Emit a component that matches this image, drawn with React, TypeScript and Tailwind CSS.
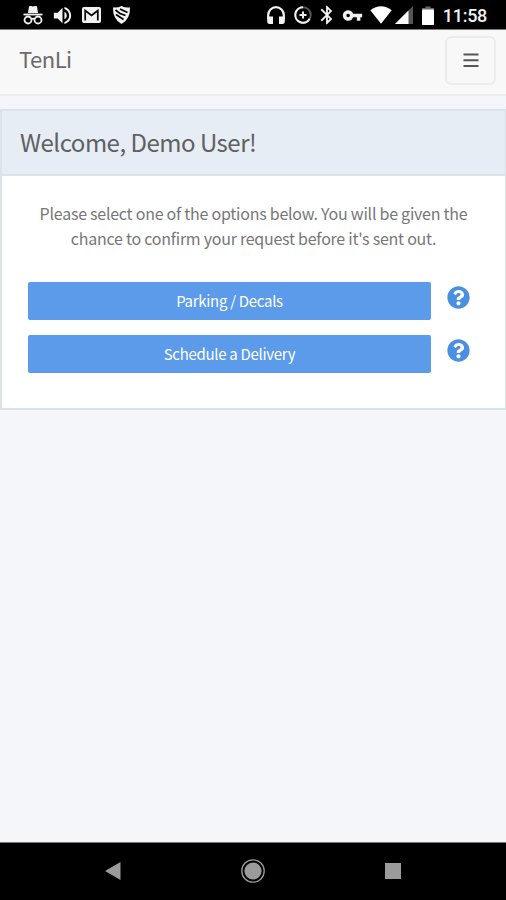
import React from 'react';
import { FaQuestionCircle } from 'react-icons/fa';
import { MdBluetooth, MdVolumeUp, MdVpnKey } from 'react-icons/md';

interface RequestOption {
  id: string;
  label: string;
}

const options: RequestOption[] = [
  { id: 'parking', label: 'Parking / Decals' },
  { id: 'delivery', label: 'Schedule a Delivery' },
];

const IncognitoIcon = () => (
  <svg width="20" height="20" viewBox="0 0 20 20" fill="none">
    <path d="M6 1.2 L8.2 1 L10 1.6 L11.8 1 L14 1.2 L15 8 H5 Z" fill="#f2f2f2" />
    <path d="M0.5 9.5 H19.5" stroke="#f2f2f2" strokeWidth="1.8" />
    <circle cx="5" cy="15" r="3.5" stroke="#f2f2f2" strokeWidth="1.8" />
    <circle cx="15" cy="15" r="3.5" stroke="#f2f2f2" strokeWidth="1.8" />
    <path d="M8 14.3 Q10 13 12 14.3" stroke="#f2f2f2" strokeWidth="1.6" />
  </svg>
);

const MailIcon = () => (
  <svg width="19" height="16" viewBox="0 0 19 16">
    <rect width="19" height="16" rx="2" fill="#f2f2f2" />
    <path d="M3.2 13.5 V3.5 L9.5 8.5 L15.8 3.5 V13.5" fill="none" stroke="#000" strokeWidth="1.7" />
  </svg>
);

const ShieldIcon = () => (
  <svg width="19" height="20" viewBox="0 0 19 20">
    <path d="M1 2.5 Q6 3 9.5 1 Q13 3 18 2.5 Q18.5 14 9.5 19 Q0.5 14 1 2.5 Z" fill="#f2f2f2" />
    <path d="M3.5 5 L8 8.5 L13.5 10.5 M8 4 L15.5 7.5 M4 9.5 L11.5 14.5" fill="none" stroke="#000" strokeWidth="1.6" />
  </svg>
);

const HeadphonesIcon = () => (
  <svg width="18" height="19" viewBox="0 0 18 19">
    <path d="M1.2 13 V9 A7.8 7.8 0 0 1 16.8 9 V13" fill="none" stroke="#f2f2f2" strokeWidth="2.2" />
    <path d="M0.2 10.5 H6 V18 H2.5 Q0.2 18 0.2 15.5 Z M17.8 10.5 H12 V18 H15.5 Q17.8 18 17.8 15.5 Z" fill="#f2f2f2" />
  </svg>
);

const DataSaverIcon = () => (
  <svg width="18" height="18" viewBox="0 0 18 18" fill="none">
    <circle cx="9" cy="9" r="7.7" stroke="#555" strokeWidth="2" />
    <path d="M9 1.3 A7.7 7.7 0 1 0 15.7 12.8" stroke="#f2f2f2" strokeWidth="2" />
    <path d="M9 5.5 V12.5 M5.5 9 H12.5" stroke="#f2f2f2" strokeWidth="2" />
  </svg>
);

const WifiIcon = () => (
  <svg width="22" height="18" viewBox="0 0 22 18">
    <path d="M0.3 4.3 Q11 -4 21.7 4.3 L11 17.7 Z" fill="#fff" />
  </svg>
);

const SignalIcon = () => (
  <svg width="18" height="18" viewBox="0 0 18 18">
    <path d="M18 0 V18 H0 Z" fill="#555" />
    <path d="M13.5 4.5 V18 H0 Z" fill="#fff" />
  </svg>
);

const BatteryIcon = () => (
  <svg width="12" height="19" viewBox="0 0 12 19">
    <path d="M3.5 0.5 H8.5 V2 H12 V4 H0 V2 H3.5 Z" fill="#666" />
    <rect y="3.5" width="12" height="15.5" rx="0.8" fill="#fff" />
  </svg>
);

const MenuIcon = () => (
  <svg width="16" height="14" viewBox="0 0 16 14">
    <path d="M0.5 1.5 H15.5 M0.5 7.3 H15.5 M0.5 13 H15.5" stroke="#555" strokeWidth="1.9" />
  </svg>
);

const StatusBar = () => (
  <div className="flex h-[30px] shrink-0 items-center border-b border-[#777] bg-black pl-[23px] pr-[19px] pt-px text-[#f2f2f2]">
    <IncognitoIcon />
    <MdVolumeUp size={23} className="ml-[8px]" />
    <div className="ml-[8px]"><MailIcon /></div>
    <div className="ml-[11px]"><ShieldIcon /></div>
    <div className="ml-auto flex items-center">
      <HeadphonesIcon />
      <div className="ml-[9px]"><DataSaverIcon /></div>
      <MdBluetooth size={22} className="ml-[4px]" />
      <MdVpnKey size={21} className="ml-[4px]" />
      <div className="ml-[7px]"><WifiIcon /></div>
      <div className="ml-[3px]"><SignalIcon /></div>
      <div className="ml-[9px]"><BatteryIcon /></div>
      <span className="ml-[9px] mt-px font-['Roboto',sans-serif] text-[18px] leading-none font-medium tracking-[-0.3px]">11:58</span>
    </div>
  </div>
);

const NavigationBar = () => (
  <div className="flex h-[58px] shrink-0 items-center justify-between border-t border-[#777] bg-black pb-[2px] pl-[105px] pr-[105px]">
    <svg width="16" height="18" viewBox="0 0 16 18">
      <path d="M0 9 L15.5 0 V18 Z" fill="#9b9b9b" />
    </svg>
    <svg width="24" height="24" viewBox="0 0 24 24">
      <circle cx="12" cy="12" r="11.2" fill="none" stroke="#9b9b9b" strokeWidth="1.3" />
      <circle cx="12" cy="12" r="8.6" fill="#9b9b9b" />
    </svg>
    <div className="h-4 w-4 bg-[#9b9b9b]" />
  </div>
);

export default function App() {
  return (
    <div className="flex h-[900px] w-[506px] flex-col overflow-hidden bg-[#f4f6f9] font-['Noto_Sans_CJK_SC',sans-serif] text-[#58595b]">
      <StatusBar />

      <header className="flex h-[66px] shrink-0 items-start justify-between border-b-2 border-[#eceeee] bg-[#f8f8f8] pt-[6px] pl-[19px] pr-[10px]">
        <span className="pt-[11px] text-[22px] leading-none tracking-[-0.5px] text-[#6a6a6a]">TenLi</span>
        <button className="flex h-[49px] w-[51px] items-center justify-center rounded-md border-2 border-[#ececec] pb-[2px]">
          <MenuIcon />
        </button>
      </header>

      <main className="flex-1 pt-[13px]">
        <section className="h-[301px] border-2 border-r border-[#dbe3ea] bg-white">
          <div className="flex h-[65px] items-center border-b-2 border-[#dbe3e7] bg-[#e7edf4] pb-[2px] pl-[18px]">
            <h1 className="text-[24px] leading-none tracking-[-0.5px] text-[#5e6062]">Welcome, Demo User!</h1>
          </div>
          <p className="pt-[25px] text-center text-[16px] leading-[25px] tracking-[-0.25px] text-[#777]">
            Please select one of the options below. You will be given the
            <br />
            chance to confirm your request before it's sent out.
          </p>
          <div className="flex flex-col gap-[15px] pt-[31px] pl-[26px]">
            {options.map((option) => (
              <div key={option.id} className="flex h-[38px] items-start">
                <button className="h-[38px] w-[403px] rounded-[2px] bg-[#5c9aea] text-[15px] leading-[36px] tracking-[-0.3px] text-white">
                  {option.label}
                </button>
                <FaQuestionCircle size={23} className="ml-[16px] mt-[4px] text-[#4a90e2]" />
              </div>
            ))}
          </div>
        </section>
      </main>

      <NavigationBar />
    </div>
  );
}
